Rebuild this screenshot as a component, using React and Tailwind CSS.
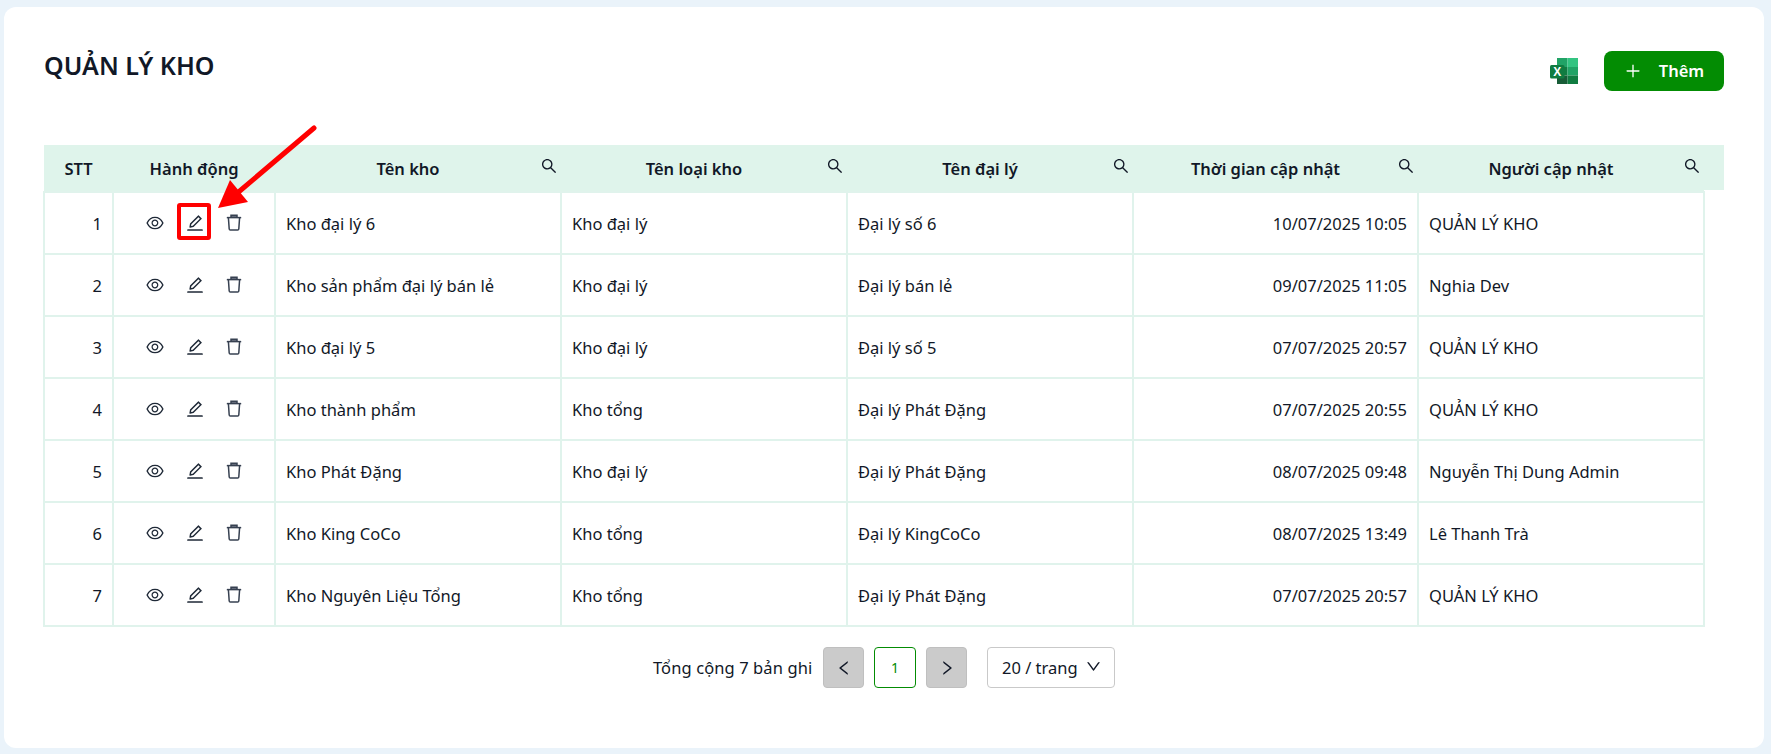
import React from "react";
import {
  AiOutlineEye,
  AiOutlineEdit,
  AiOutlineSearch,
  AiOutlinePlus,
  AiOutlineLeft,
  AiOutlineRight,
  AiOutlineDown,
} from "react-icons/ai";

const rows = [
  ["Kho đại lý 6", "Kho đại lý", "Đại lý số 6", "10/07/2025 10:05", "QUẢN LÝ KHO"],
  ["Kho sản phẩm đại lý bán lẻ", "Kho đại lý", "Đại lý bán lẻ", "09/07/2025 11:05", "Nghia Dev"],
  ["Kho đại lý 5", "Kho đại lý", "Đại lý số 5", "07/07/2025 20:57", "QUẢN LÝ KHO"],
  ["Kho thành phẩm", "Kho tổng", "Đại lý Phát Đặng", "07/07/2025 20:55", "QUẢN LÝ KHO"],
  ["Kho Phát Đặng", "Kho đại lý", "Đại lý Phát Đặng", "08/07/2025 09:48", "Nguyễn Thị Dung Admin"],
  ["Kho King CoCo", "Kho tổng", "Đại lý KingCoCo", "08/07/2025 13:49", "Lê Thanh Trà"],
  ["Kho Nguyên Liệu Tổng", "Kho tổng", "Đại lý Phát Đặng", "07/07/2025 20:57", "QUẢN LÝ KHO"],
];

const headers = ["Tên kho", "Tên loại kho", "Tên đại lý", "Thời gian cập nhật", "Người cập nhật"];

const ExcelIcon = () => (
  <svg width="28" height="26" viewBox="0 0 28 26">
    <rect x="7" y="0" width="10.5" height="9" fill="#21a366" />
    <rect x="17.5" y="0" width="10.5" height="9" fill="#33c481" />
    <rect x="7" y="9" width="10.5" height="8.5" fill="#107c41" />
    <rect x="17.5" y="9" width="10.5" height="8.5" fill="#21a366" />
    <rect x="7" y="17.5" width="10.5" height="8.5" fill="#185c37" />
    <rect x="17.5" y="17.5" width="10.5" height="8.5" fill="#107c41" />
    <rect x="0" y="7" width="14.5" height="13.5" rx="1.5" fill="#107c41" />
    <text x="7.2" y="18" textAnchor="middle" fontSize="12" fontWeight="700" fill="#fff" fontFamily="Liberation Sans, sans-serif">X</text>
  </svg>
);

const TrashIcon = () => (
  <svg width="16" height="17" viewBox="0 0 16 17" fill="none" stroke="#374151" strokeWidth="1.5">
    <path d="M5 3.5 V1.2 H11 V3.5" fill="#6b7280" />
    <path d="M0.8 3.6 H15.2" />
    <path d="M2.4 3.6 L3.2 15 Q3.3 16 4.3 16 H11.7 Q12.7 16 12.8 15 L13.6 3.6" />
  </svg>
);

const Arrow = () => (
  <svg className="absolute left-0 top-0 pointer-events-none" width="340" height="230" viewBox="0 0 340 230">
    <line x1="314" y1="128" x2="235" y2="195" stroke="#ff0000" strokeWidth="5" strokeLinecap="round" />
    <polygon points="218,208 230,180 248,202" fill="#ff0000" />
  </svg>
);

export default function App() {
  return (
    <div className="relative w-[1771px] h-[754px] overflow-hidden bg-[#eaf3fa] pt-[7px] pl-[4px] font-['Noto_Sans',sans-serif] text-[#111827]">
      <div className="w-[1760px] h-[741px] bg-white rounded-xl pt-[38px] pl-[40px] pr-[40px]">
        <div className="flex items-start justify-between h-[100px]">
          <h1 className="text-[25px] leading-[32px] font-semibold mt-[4px]">QUẢN LÝ KHO</h1>
          <div className="flex items-center gap-[26px] mt-[6px]">
            <ExcelIcon />
            <button className="w-[120px] h-[40px] rounded-lg bg-[#038c03] text-white flex items-center justify-center gap-[17px] text-[16.5px] font-semibold">
              <AiOutlinePlus className="text-[18px]" />
              Thêm
            </button>
          </div>
        </div>

        <div className="relative w-[1680px]">
          <div className="absolute right-0 top-0 w-[21px] h-[45px] bg-[#dff4eb]" />
          <table className="w-[1660px] -ml-px table-fixed border-collapse text-[16.5px] relative">
            <colgroup>
              <col className="w-[69px]" />
              <col className="w-[162px]" />
              <col className="w-[286px]" />
              <col className="w-[286px]" />
              <col className="w-[286px]" />
              <col className="w-[285px]" />
              <col className="w-[286px]" />
            </colgroup>
            <thead>
              <tr className="h-[47px] bg-[#dff4eb]">
                <th className="font-semibold text-center pt-[2px]">STT</th>
                <th className="font-semibold text-center pt-[2px]">Hành động</th>
                {headers.map((h) => (
                  <th key={h} className="font-semibold text-center relative pr-[20px] pt-[2px]">
                    {h}
                    <AiOutlineSearch className="absolute right-[3px] top-[12px] text-[18px]" />
                  </th>
                ))}
              </tr>
            </thead>
            <tbody>
              {rows.map((r, i) => (
                <tr key={i} className="h-[62px]">
                  <td className="border-2 border-[#e0f3ec] text-right pr-[10px] pt-[2px]">{i + 1}</td>
                  <td className="border-2 border-[#e0f3ec]">
                    <div className="flex items-center justify-center gap-[20px] text-[20px] text-[#1f2937] -mt-[1px] -ml-[2px]">
                      <AiOutlineEye />
                      <AiOutlineEdit className="mr-px" />
                      <TrashIcon />
                    </div>
                  </td>
                  <td className="border-2 border-[#e0f3ec] px-[10px] pt-[2px]">{r[0]}</td>
                  <td className="border-2 border-[#e0f3ec] px-[10px] pt-[2px]">{r[1]}</td>
                  <td className="border-2 border-[#e0f3ec] px-[10px] pt-[2px]">{r[2]}</td>
                  <td className="border-2 border-[#e0f3ec] px-[10px] pt-[2px] text-right">{r[3]}</td>
                  <td className="border-2 border-[#e0f3ec] px-[10px] pt-[2px]">{r[4]}</td>
                </tr>
              ))}
            </tbody>
          </table>
        </div>

        <div className="flex items-center h-[41px] mt-[20px] ml-[609px] text-[16.5px]">
          <span className="w-[170px] whitespace-nowrap tracking-[0.1px] pt-[2px]">Tổng cộng 7 bản ghi</span>
          <button className="w-[41px] h-[41px] rounded bg-[#cbcbcb] border border-[#bfbfbf] flex items-center justify-center text-[18px]"><AiOutlineLeft /></button>
          <button className="w-[42px] h-[41px] ml-[10px] rounded border border-[#038c03] text-[#038c03] text-[14px]">1</button>
          <button className="w-[41px] h-[41px] ml-[10px] rounded bg-[#cbcbcb] border border-[#bfbfbf] flex items-center justify-center text-[18px]"><AiOutlineRight /></button>
          <div className="w-[128px] h-[41px] ml-[20px] rounded border border-[#c9c9c9] flex items-center justify-between pl-[14px] pr-[12px]">
            <span className="pt-[2px]">20 / trang</span>
            <AiOutlineDown className="text-[17px] -mt-[3px]" />
          </div>
        </div>
      </div>

      <div className="absolute left-[177px] top-[203px] w-[34px] h-[37px] border-[4px] border-[#ff0000] rounded-[3px]" />
      <Arrow />
    </div>
  );
}
